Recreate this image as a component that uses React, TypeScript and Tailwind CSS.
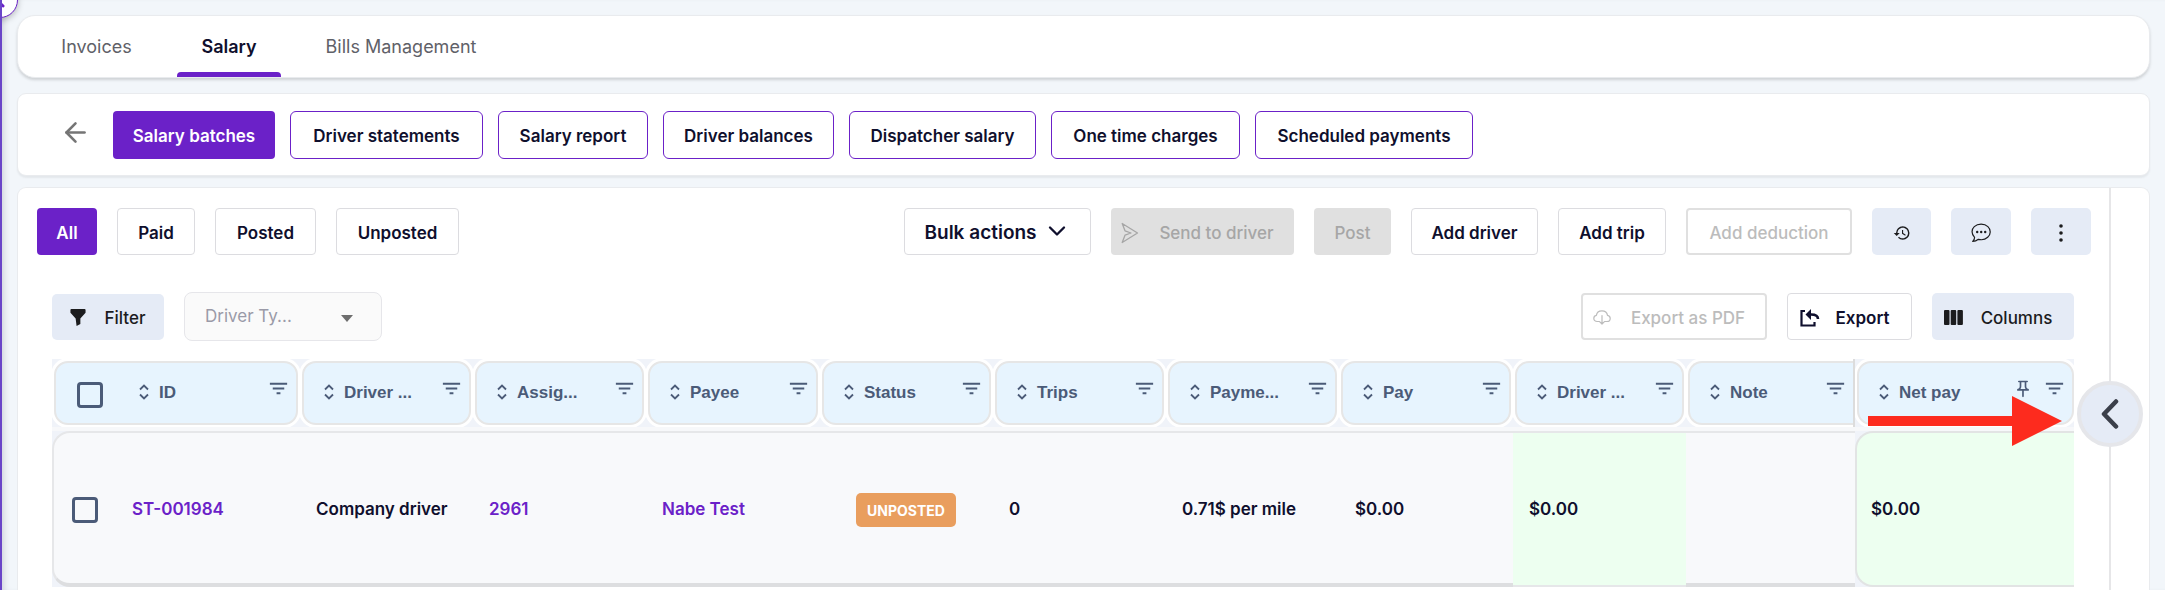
import * as React from "react";
import { ArrowLeft, ChevronDown, ChevronLeft } from "lucide-react";
import {
  MdFilterList,
  MdOutlineHistory,
  MdOutlinePushPin,
} from "react-icons/md";
import { cva } from "class-variance-authority";
import { clsx } from "clsx";

const button = cva(
  "flex shrink-0 items-center justify-center whitespace-nowrap rounded-[4px] pt-0.5 leading-6",
  {
    variants: {
      variant: {
        solid: "bg-[#6b21c8] font-semibold text-white",
        outline: "border border-[#dcdce0] bg-white font-semibold text-[#0f0f2d]",
        purple: "rounded-md border border-[#6b21c8] bg-white font-semibold text-[#0f0f2d]",
        soft: "rounded-[5px] bg-[#e5ebf6] font-medium text-[#1c1c1e]",
        disabled: "bg-[#e0e0e0] font-medium text-[#a6a6a6]",
        disabledOutline: "border-2 border-[#e0e0e0] bg-white font-medium text-[#bcbcbc]",
      },
      size: {
        md: "text-[17px]",
        lg: "text-[19px]",
      },
    },
    defaultVariants: { size: "md" },
  }
);

const tabs = [
  { label: "Invoices", width: "w-[129px]" },
  { label: "Salary", width: "w-[104px]" },
  { label: "Bills Management", width: "w-[208px]" },
];

const sections = [
  { label: "Salary batches", width: "w-[162px]" },
  { label: "Driver statements", width: "w-[193px]" },
  { label: "Salary report", width: "w-[150px]" },
  { label: "Driver balances", width: "w-[171px]" },
  { label: "Dispatcher salary", width: "w-[187px]" },
  { label: "One time charges", width: "w-[189px]" },
  { label: "Scheduled payments", width: "w-[218px]" },
];

const statuses = [
  { label: "All", width: "w-[60px]" },
  { label: "Paid", width: "w-[78px]" },
  { label: "Posted", width: "w-[101px]" },
  { label: "Unposted", width: "w-[123px]" },
];

const columns = [
  { label: "ID", width: "w-[248px]" },
  { label: "Driver ...", width: "w-[173px]" },
  { label: "Assig...", width: "w-[173px]" },
  { label: "Payee", width: "w-[174px]" },
  { label: "Status", width: "w-[173px]" },
  { label: "Trips", width: "w-[173px]" },
  { label: "Payme...", width: "w-[173px]" },
  { label: "Pay", width: "w-[174px]" },
  { label: "Driver ...", width: "w-[173px]" },
  { label: "Note", width: "w-[169px]" },
  { label: "Net pay", width: "w-[219px]" },
];

const SortIcon = () => (
  <svg
    viewBox="0 0 10 16"
    className="mr-2.5 mb-0.5 h-4 w-2.5 shrink-0"
    fill="none"
    stroke="currentColor"
    strokeWidth="1.8"
  >
    <path d="M1 5.500 5 1.500l4 4M1 10.500l4 4 4-4" />
  </svg>
);

const HeaderCell = ({ label }: { label: string }) => {
  const isId = label === "ID";
  const isNote = label === "Note";
  const isPinned = label === "Net pay";
  return (
    <th
      scope="col"
      className={clsx(
        "h-[68px] overflow-hidden bg-[#f0f3f9] p-0 pt-0.5 align-top",
        isNote && "border-r-2 border-[#dcdcdc]"
      )}
    >
      <div
        className={clsx(
          "flex h-16 items-start border-2 border-[#e6e6e6] bg-[#e7f4fe] pr-1.5 text-[#4b5b78] shadow-[0_0_0_3px_#ffffff]",
          isNote ? "ml-0.5 rounded-l-[14px] border-r-0" : "mx-0.5 rounded-[14px]",
          isPinned && "mr-0"
        )}
      >
        {isId && (
          <input
            type="checkbox"
            aria-label="Select all rows"
            className="mt-[19px] ml-[21px] size-[26px] shrink-0 appearance-none rounded-[4px] border-3 border-[#4b5b78]"
          />
        )}
        <button
          type="button"
          className={clsx(
            "mt-[18px] flex min-w-0 items-center text-left font-['Liberation_Sans',sans-serif] text-[17px] leading-6 font-bold",
            isId ? "ml-9" : "ml-5"
          )}
        >
          <SortIcon />
          {label}
        </button>
        <span className="ml-auto flex shrink-0 items-center gap-2.5 pt-3.5">
          {isPinned && (
            <button type="button" aria-label="Unpin Net pay">
              <MdOutlinePushPin className="size-5" />
            </button>
          )}
          <button type="button" aria-label={`Filter ${label}`}>
            <MdFilterList className="size-[23px]" />
          </button>
        </span>
      </div>
    </th>
  );
};

const cell =
  "h-[156px] border-t-2 border-b-4 border-t-[#e6e7e9] border-b-[#dddee0] bg-[#f8f9fb] px-4 pt-1 pb-0 whitespace-nowrap";

const SalaryTable = () => (
  <table className="w-full table-fixed border-separate border-spacing-0 bg-[#f0f3f9] text-left">
    <colgroup>
      {columns.map((column, index) => (
        <col key={index} className={column.width} />
      ))}
    </colgroup>
    <thead>
      <tr>
        {columns.map((column, index) => (
          <HeaderCell key={index} label={column.label} />
        ))}
      </tr>
    </thead>
    <tbody className="text-[17px] font-semibold text-[#0f0f2d]">
      <tr>
        <td colSpan={11} className="h-1 bg-[#f7f8fa] p-0" />
      </tr>
      <tr>
        <td className={clsx(cell, "rounded-l-[18px] border-l-2 border-l-[#e6e7e9]")}>
          <div className="flex items-center gap-[34px]">
            <input
              type="checkbox"
              aria-label="Select ST-001984"
              className="ml-0.5 size-[26px] shrink-0 appearance-none rounded-[4px] border-3 border-[#4b5b78]"
            />
            <a href="#batch" className="text-[#6b21c8]">
              ST-001984
            </a>
          </div>
        </td>
        <td className={cell}>Company driver</td>
        <td className={cell}>
          <a href="#trip" className="text-[#6b21c8]">
            2961
          </a>
        </td>
        <td className={cell}>
          <a href="#payee" className="text-[#6b21c8]">
            Nabe Test
          </a>
        </td>
        <td className={cell}>
          <span className="ml-5 flex h-[34px] w-[100px] items-center justify-center rounded-[5px] bg-[#e99e5e] text-[14px] font-bold text-white">
            UNPOSTED
          </span>
        </td>
        <td className={cell}>0</td>
        <td className={cell}>0.71$ per mile</td>
        <td className={cell}>$0.00</td>
        <td className="border-y-2 border-[#e6e7e9] bg-[#edfff0] px-4 pt-0.5 pb-0">$0.00</td>
        <td className={cell} />
        <td className="rounded-l-[18px] border-y-2 border-l-2 border-[#e2e4e4] bg-[#edfff0] px-3.5 pt-0.5 pb-0">
          $0.00
        </td>
      </tr>
    </tbody>
  </table>
);

const Toolbar = () => (
  <div className="flex items-center justify-between pr-[18px]">
    <div className="flex gap-5">
      {statuses.map((status, index) => (
        <button
          key={status.label}
          type="button"
          className={clsx(
            button({ variant: index === 0 ? "solid" : "outline" }),
            "h-[47px]",
            status.width
          )}
        >
          {status.label}
        </button>
      ))}
    </div>
    <div className="flex gap-5">
      <button
        type="button"
        aria-haspopup="menu"
        className={clsx(button({ variant: "outline", size: "lg" }), "h-[47px] w-[187px] gap-1.5")}
      >
        Bulk actions
        <ChevronDown className="mb-1 size-7" />
      </button>
      <button
        type="button"
        disabled
        className={clsx(button({ variant: "disabled" }), "h-[47px] w-[183px] gap-5 pr-2.5")}
      >
        <svg viewBox="0 0 18 22" className="h-[22px] w-[18px]" fill="none" stroke="currentColor">
          <path
            d="M1.200 1.500 16.500 11 1.200 20.500 4 13.200 10 11 4 8.800Z"
            strokeWidth="1.300"
            strokeLinejoin="round"
          />
        </svg>
        Send to driver
      </button>
      <button
        type="button"
        disabled
        className={clsx(button({ variant: "disabled" }), "h-[47px] w-[77px]")}
      >
        Post
      </button>
      <button type="button" className={clsx(button({ variant: "outline" }), "h-[47px] w-[127px]")}>
        Add driver
      </button>
      <button type="button" className={clsx(button({ variant: "outline" }), "h-[47px] w-[108px]")}>
        Add trip
      </button>
      <button
        type="button"
        disabled
        className={clsx(button({ variant: "disabledOutline" }), "h-[47px] w-[166px]")}
      >
        Add deduction
      </button>
      <button
        type="button"
        aria-label="History"
        className={clsx(button({ variant: "soft" }), "h-[47px] w-[59px]")}
      >
        <MdOutlineHistory className="size-[18px]" />
      </button>
      <button
        type="button"
        aria-label="Messages"
        className={clsx(button({ variant: "soft" }), "h-[47px] w-[60px]")}
      >
        <svg viewBox="0 0 20 20" className="size-5" fill="none" stroke="currentColor">
          <path
            d="M3.600 14.300C.2 10.800.3 6.400 3.300 3.600c3.600-3.300 10-3.400 13.600 0 3.200 3 3.100 7.800-.2 10.700-2.500 2.200-6 2.900-9.300 2-1.500 1.300-3.500 2.200-5.700 2.200 1.200-1 1.900-2.600 1.900-4.200Z"
            strokeWidth="1.200"
            strokeLinejoin="round"
          />
          <path d="M6.200 9h.01M10.200 9h.01M14.200 9h.01" strokeWidth="2.400" strokeLinecap="round" />
        </svg>
      </button>
      <button
        type="button"
        aria-label="More actions"
        className={clsx(button({ variant: "soft" }), "h-[47px] w-[60px]")}
      >
        <svg viewBox="0 0 4 20" className="h-5 w-1" fill="currentColor">
          <circle cx="2" cy="3" r="1.800" />
          <circle cx="2" cy="10" r="1.800" />
          <circle cx="2" cy="17" r="1.800" />
        </svg>
      </button>
    </div>
  </div>
);

const Filters = () => (
  <div className="flex items-center justify-between">
    <div className="flex items-center gap-5">
      <button type="button" className={clsx(button({ variant: "soft" }), "h-[46px] w-[112px] gap-[18px]")}>
        <svg viewBox="0 0 16 18" className="h-[17px] w-4" fill="currentColor">
          <path d="M1 0h14q1 0 1 1v3l-5.500 6v6L6.500 18q-.5-4-1-8L0 4V1q0-1 1-1Z" />
        </svg>
        Filter
      </button>
      <div className="relative">
        <select
          aria-label="Driver type"
          className="h-[49px] w-[198px] appearance-none rounded-lg border border-[#e6e6ea] bg-[#fafafa] px-5 text-[17px] text-[#9a9aa8]"
        >
          <option>Driver Ty...</option>
        </select>
        <svg
          viewBox="0 0 12 7"
          className="pointer-events-none absolute top-[23px] right-[29px] h-[7px] w-3"
          fill="#6e6e6e"
        >
          <path d="M0 0h12L6 7Z" />
        </svg>
      </div>
    </div>
    <div className="flex gap-5">
      <button
        type="button"
        disabled
        className={clsx(button({ variant: "disabledOutline" }), "h-[47px] w-[186px] gap-5 pr-2.5")}
      >
        <svg viewBox="0 0 18 15" className="h-[15px] w-[18px]" fill="none" stroke="currentColor">
          <path
            d="M6.500 11.500H4.200C2.200 11.500.8 10.200.8 8.400c0-1.600 1.100-2.800 2.600-3C3.700 2.700 6 .8 8.900.8c2.800 0 5.200 1.900 5.600 4.500 1.600.2 2.700 1.500 2.700 3.100 0 1.800-1.400 3.100-3.200 3.100h-2.500M9 5.500v8.500M6.800 11.800 9 14l2.200-2.200"
            strokeWidth="1.200"
            strokeLinecap="round"
            strokeLinejoin="round"
          />
        </svg>
        Export as PDF
      </button>
      <button
        type="button"
        className={clsx(button({ variant: "outline" }), "h-[47px] w-[125px] gap-4 pr-2.5")}
      >
        <svg viewBox="0 0 20 18" className="h-[18px] w-5" fill="none" stroke="currentColor">
          <path d="M5 2H1.500v14.500h13V13" strokeWidth="2.200" />
          <path d="M18 10q0-4.500-7-4.500" strokeWidth="2.600" />
          <path d="M5.500 5.500 11 0v11Z" fill="currentColor" stroke="none" />
        </svg>
        Export
      </button>
      <button
        type="button"
        className={clsx(button({ variant: "soft" }), "h-[47px] w-[142px] gap-[18px] pr-2.5")}
      >
        <svg viewBox="0 0 19 15" className="h-[15px] w-[19px]" fill="currentColor">
          <rect width="5.500" height="15" rx="1" />
          <rect x="6.700" width="5.500" height="15" rx="1" />
          <rect x="13.400" width="5.500" height="15" rx="1" />
        </svg>
        Columns
      </button>
    </div>
  </div>
);

export default function App() {
  return (
    <div className="relative flex min-h-screen flex-col overflow-hidden border-l-2 border-[#6a45c8] bg-[#f2f6fa] pt-[15px] pr-[15px] pl-[15px] font-[Inter,sans-serif] shadow-[inset_6px_0_6px_-4px_#cfd3da]">
      {/* Sidebar toggle */}
      <button
        type="button"
        aria-label="Collapse sidebar"
        className="absolute -top-[18px] -left-[20px] flex size-9 items-center justify-center rounded-full border border-[#6b21c8] bg-white text-[#6b21c8] shadow-[0_2px_6px_#00000040]"
      >
        <ChevronLeft className="size-6" strokeWidth={3} />
      </button>

      <nav className="flex h-[63px] shrink-0 items-stretch gap-4 rounded-[18px] border border-[#e9ebee] bg-white pl-3.5 shadow-[0_2px_3px_#00000026]">
        {tabs.map((tab, index) => (
          <a
            key={tab.label}
            href={`#${tab.label}`}
            aria-current={index === 1 ? "page" : undefined}
            className={clsx(
              "relative flex items-center justify-center text-[18px] leading-6",
              tab.width,
              index === 1 ? "font-semibold text-[#0f0f2d]" : "text-[#5f6168]"
            )}
          >
            {tab.label}
            {index === 1 && (
              <span className="absolute inset-x-0 bottom-0 h-[5px] rounded-t-[4px] bg-[#6b21c8]" />
            )}
          </a>
        ))}
      </nav>

      <section className="mt-[15px] flex h-[83px] shrink-0 items-center rounded-[9px] border border-[#e9ebee] bg-white pl-[42px] shadow-[0_2px_2px_#0000000f]">
        <button type="button" aria-label="Back" className="mr-[22px] pb-1 text-[#757575]">
          <ArrowLeft className="size-[31px]" />
        </button>
        <div className="flex gap-[15px]">
          {sections.map((section, index) => (
            <button
              key={section.label}
              type="button"
              className={clsx(
                button({ variant: index === 0 ? "solid" : "purple" }),
                "h-12",
                section.width
              )}
            >
              {section.label}
            </button>
          ))}
        </div>
      </section>

      <section className="mt-[11px] flex grow rounded-t-[9px] border border-b-0 border-[#e9ebee] bg-white">
        <main className="min-w-0 grow border-r-2 border-[#e6e6e8] pt-5 pl-[19px]">
          <Toolbar />
          <div className="mt-[37px] mr-[35px] ml-[15px]">
            <Filters />
            <div className="relative mt-[18px]">
              <SalaryTable />
              <svg
                viewBox="0 0 194 50"
                className="absolute top-[37px] right-3 h-[50px] w-[194px]"
                fill="#fd2b1e"
              >
                <path d="M0 20h144V0l50 25-50 25V30H0Z" />
              </svg>
            </div>
          </div>
        </main>
        <aside className="relative w-[38px] shrink-0">
          <button
            type="button"
            aria-label="Open side panel"
            className="absolute top-[193px] -left-[34px] flex size-[66px] items-center justify-center rounded-full border-4 border-[#e5e6ea] bg-[#e5ebf6] text-[#3b3f4a]"
          >
            <svg viewBox="0 0 18 30" className="h-[30px] w-[18px]" fill="none" stroke="currentColor">
              <path d="M15 2.500 3 15l12 12.500" strokeWidth="4.500" strokeLinecap="round" strokeLinejoin="round" />
            </svg>
          </button>
        </aside>
      </section>
    </div>
  );
}
